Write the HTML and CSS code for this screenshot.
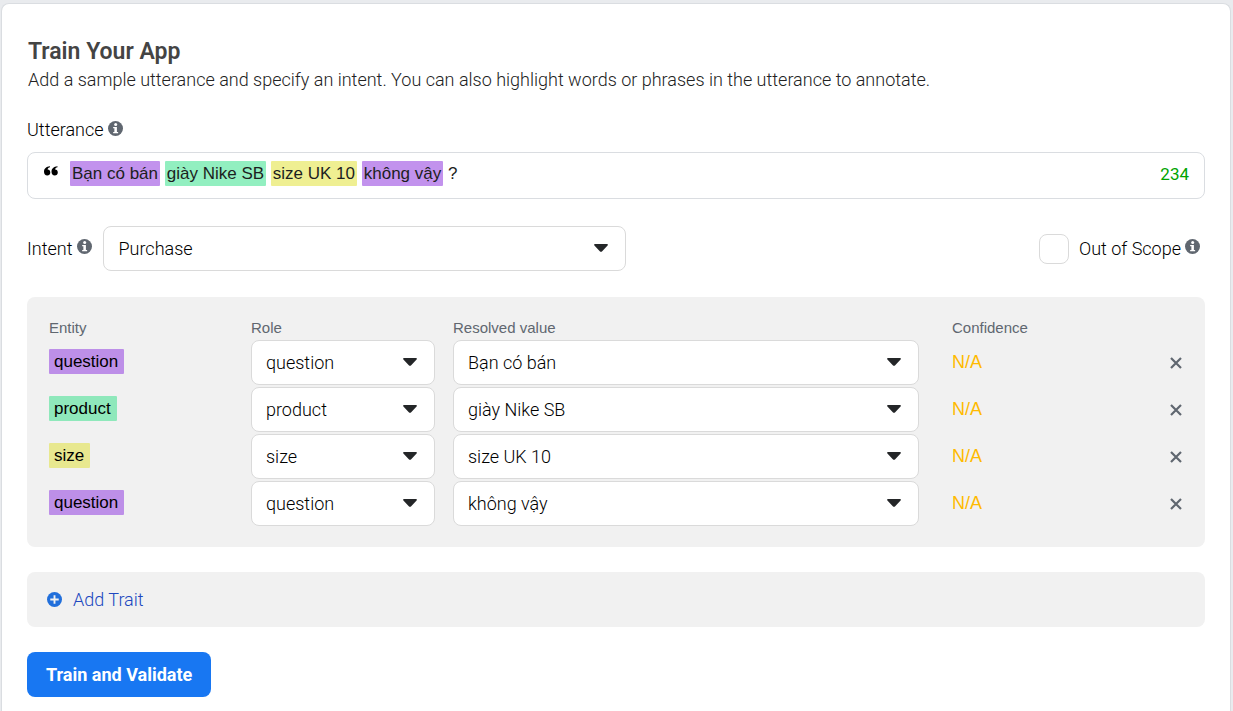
FILE: index.html
```html
<!DOCTYPE html>
<html lang="en">
<head>
<meta charset="utf-8">
<meta name="viewport" content="width=device-width, initial-scale=1">
<title>Train Your App</title>
<link rel="stylesheet" href="styles.css">
</head>
<body>
<svg class="sprite" aria-hidden="true">
  <symbol id="info" viewBox="0 0 16 16">
    <circle cx="8" cy="8" r="8" fill="#606770"/>
    <circle cx="8.200" cy="3.700" r="1.600" fill="#fff"/>
    <path d="M5.500 6.400h4v5.200h1.300v1.400H5.500v-1.400h1.300V7.800H5.500z" fill="#fff"/>
  </symbol>
  <symbol id="caret" viewBox="0 0 14 8">
    <path d="M1 0h12c.9 0 1.200.9.600 1.500L8.200 7.300c-.7.700-1.700.7-2.400 0L.4 1.500C-.2.900.1 0 1 0z" fill="#242628"/>
  </symbol>
  <symbol id="cross" viewBox="0 0 12 12">
    <path d="M1 1l10 10M11 1L1 11" fill="none" stroke="#606770" stroke-width="2.200"/>
  </symbol>
</svg>
<main class="card">
  <header class="heading">
    <h1 class="title">Train Your App</h1>
    <p class="subtitle">Add a sample utterance and specify an intent. You can also highlight words or phrases in the utterance to annotate.</p>
  </header>

  <div class="label-row">
    <span class="label" id="utterance-label">Utterance</span>
    <svg class="info-icon" aria-hidden="true"><use href="#info"/></svg>
  </div>
  <div class="utterance">
    <svg class="quote-icon" viewBox="0 0 14 10" aria-hidden="true">
      <path d="M6 .3v1C4.500 1.600 3.700 2.400 3.600 3.600c1.600 0 2.700 1.200 2.700 2.800S5 9.500 3.300 9.500C1.300 9.500 0 8 0 5.800 0 2.700 2.300.4 6 .3zM13.500.3v1c-1.500.3-2.300 1.100-2.400 2.300 1.600 0 2.700 1.200 2.700 2.800s-1.300 3.100-3 3.100c-2 0-3.300-1.500-3.300-3.700C7.500 2.700 9.800.4 13.500.3z"/>
    </svg>
    <div class="utterance-text" role="textbox" contenteditable="true" spellcheck="false" aria-labelledby="utterance-label"><mark class="mark purple">Bạn có bán</mark> <mark class="mark green">giày Nike SB</mark> <mark class="mark yellow">size UK 10</mark> <mark class="mark purple">không vậy</mark> ?</div>
    <span class="counter">234</span>
  </div>

  <div class="intent-row">
    <div class="intent">
      <label class="label" for="intent">Intent</label>
      <svg class="info-icon" aria-hidden="true"><use href="#info"/></svg>
      <div class="dropdown intent-dropdown">
        <select class="select" id="intent"><option>Purchase</option></select>
        <svg class="caret" aria-hidden="true"><use href="#caret"/></svg>
      </div>
    </div>
    <div class="scope">
      <input class="checkbox" type="checkbox" id="scope">
      <label class="label" for="scope">Out of Scope</label>
      <svg class="info-icon" aria-hidden="true"><use href="#info"/></svg>
    </div>
  </div>

  <section class="panel entities">
    <table class="table">
      <colgroup><col class="col-entity"><col class="col-role"><col class="col-value"><col class="col-confidence"><col class="col-remove"></colgroup>
      <thead>
        <tr><th>Entity</th><th>Role</th><th>Resolved value</th><th>Confidence</th><td></td></tr>
      </thead>
      <tbody>
        <tr>
          <td><span class="tag purple">question</span></td>
          <td><div class="dropdown role"><select class="select" aria-label="Role"><option>question</option></select><svg class="caret" aria-hidden="true"><use href="#caret"/></svg></div></td>
          <td><div class="dropdown value"><select class="select" aria-label="Resolved value"><option>Bạn có bán</option></select><svg class="caret" aria-hidden="true"><use href="#caret"/></svg></div></td>
          <td class="confidence">N/A</td>
          <td><button class="remove" type="button" aria-label="Remove"><svg class="cross" aria-hidden="true"><use href="#cross"/></svg></button></td>
        </tr>
        <tr>
          <td><span class="tag green">product</span></td>
          <td><div class="dropdown role"><select class="select" aria-label="Role"><option>product</option></select><svg class="caret" aria-hidden="true"><use href="#caret"/></svg></div></td>
          <td><div class="dropdown value"><select class="select" aria-label="Resolved value"><option>giày Nike SB</option></select><svg class="caret" aria-hidden="true"><use href="#caret"/></svg></div></td>
          <td class="confidence">N/A</td>
          <td><button class="remove" type="button" aria-label="Remove"><svg class="cross" aria-hidden="true"><use href="#cross"/></svg></button></td>
        </tr>
        <tr>
          <td><span class="tag yellow">size</span></td>
          <td><div class="dropdown role"><select class="select" aria-label="Role"><option>size</option></select><svg class="caret" aria-hidden="true"><use href="#caret"/></svg></div></td>
          <td><div class="dropdown value"><select class="select" aria-label="Resolved value"><option>size UK 10</option></select><svg class="caret" aria-hidden="true"><use href="#caret"/></svg></div></td>
          <td class="confidence">N/A</td>
          <td><button class="remove" type="button" aria-label="Remove"><svg class="cross" aria-hidden="true"><use href="#cross"/></svg></button></td>
        </tr>
        <tr>
          <td><span class="tag purple">question</span></td>
          <td><div class="dropdown role"><select class="select" aria-label="Role"><option>question</option></select><svg class="caret" aria-hidden="true"><use href="#caret"/></svg></div></td>
          <td><div class="dropdown value"><select class="select" aria-label="Resolved value"><option>không vậy</option></select><svg class="caret" aria-hidden="true"><use href="#caret"/></svg></div></td>
          <td class="confidence">N/A</td>
          <td><button class="remove" type="button" aria-label="Remove"><svg class="cross" aria-hidden="true"><use href="#cross"/></svg></button></td>
        </tr>
      </tbody>
    </table>
  </section>

  <section class="panel traits">
    <button class="add-trait" type="button">
      <svg class="plus-icon" viewBox="0 0 16 16" aria-hidden="true"><circle cx="8" cy="8" r="8" fill="#216fdb"/><path d="M8 3.500v9M3.500 8h9" stroke="#f1f1f1" stroke-width="2"/></svg>
      Add Trait
    </button>
  </section>

  <button class="submit" type="button">Train and Validate</button>
</main>
</body>
</html>
```

FILE: styles.css
```css
* { box-sizing: border-box; }

body {
  margin: 0;
  padding: 3px 2px 0 1px;
  min-height: 100vh;
  display: flex;
  background: #e9ebee;
  color: #1c1e21;
  font: 300 18px/24px Roboto, "Liberation Sans", sans-serif;
}

.sprite { position: absolute; width: 0; height: 0; }

svg { display: block; flex: none; }

.card {
  flex: 1;
  display: flex;
  flex-direction: column;
  align-items: stretch;
  padding: 34px 25px 14px;
  background: #fff;
  border: 1px solid #dadde1;
  border-bottom: 0;
  border-radius: 8px 8px 0 0;
}

.heading { padding-left: 1px; }

.title {
  margin: 0;
  color: #444;
  font-size: 23px;
  font-weight: 600;
  line-height: 28px;
}

.subtitle { margin: 2px 0 0; color: #222; }

.label-row { display: flex; align-items: center; gap: 4px; margin-top: 26px; }
.label { color: #000; }

.info-icon { width: 15px; height: 15px; margin-bottom: 4px; }

.utterance {
  display: flex;
  align-items: flex-start;
  margin-top: 10px;
  min-height: 47px;
  padding: 9px 15px;
  border: 1px solid #dadde1;
  border-radius: 8px;
  font-family: "Liberation Sans", sans-serif;
}

.quote-icon { width: 14px; height: 10px; margin: 4px 12px 0 1px; }

.utterance-text { flex: 1; outline: 0; font-size: 17px; }

.mark { padding: 3px 2px; border-radius: 1px; color: inherit; }
.purple { background: #c292ed; }
.green { background: #92efc0; }
.yellow { background: #efef92; }

.counter { color: #00a400; font: 400 17px/24px Roboto, sans-serif; }

.intent-row {
  display: flex;
  justify-content: space-between;
  align-items: center;
  margin-top: 27px;
  padding-right: 5px;
}

.intent { display: flex; align-items: center; gap: 5px; }
.scope { display: flex; align-items: center; gap: 4px; }

.dropdown { display: grid; align-items: center; }
.intent-dropdown { width: 523px; margin-left: 6px; }

.select {
  grid-area: 1 / 1;
  appearance: none;
  width: 100%;
  height: 45px;
  padding: 0 40px 0 14px;
  border: 1px solid #dadada;
  border-radius: 8px;
  background: #fff;
  color: #000;
  font: inherit;
}

.caret {
  grid-area: 1 / 1;
  justify-self: end;
  width: 14px;
  height: 8px;
  margin: 0 18px 2px 0;
  pointer-events: none;
}

.checkbox {
  appearance: none;
  width: 30px;
  height: 30px;
  margin: 0 6px 0 0;
  border: 1px solid #dadada;
  border-radius: 8px;
  background: #fff;
}

.panel { background: #f1f1f1; border-radius: 8px; }
.entities { margin-top: 26px; padding: 19px 15px 19px 22px; }
.traits { margin-top: 25px; padding: 15px 20px; }

.table { width: 100%; border-collapse: collapse; table-layout: fixed; }
.col-entity, .col-role { width: 202px; }
.col-confidence { width: 202px; }
.col-remove { width: 36px; }

.table th {
  padding: 0;
  color: #606770;
  font: 15px/24px "Liberation Sans", sans-serif;
  text-align: left;
}

.table tbody td { padding: 0 0 2px; }
.table tbody .confidence { padding-bottom: 4px; color: #ffba00; font-family: "Liberation Sans", sans-serif; }
.role { width: 184px; }
.value { margin-right: 33px; }

.tag {
  display: block;
  width: fit-content;
  margin-bottom: 2px;
  padding: 0 6px 0 5px;
  border-radius: 1px;
  color: #000;
  font: 17px/25px "Liberation Sans", sans-serif;
}
.tag.purple { background: #bd8fe8; }
.tag.green { background: #8fe8bb; }
.tag.yellow { background: #e8e88f; }

button { border: 0; cursor: pointer; font: inherit; }

.remove { display: block; margin-left: auto; padding: 8px; background: none; }
.cross { width: 12px; height: 12px; }

.add-trait {
  display: flex;
  align-items: center;
  gap: 11px;
  padding: 0;
  background: none;
  color: #2048c0;
  line-height: 25px;
}
.plus-icon { width: 15px; height: 15px; }

.submit {
  align-self: flex-start;
  height: 45px;
  margin-top: 25px;
  padding: 0 19px;
  border-radius: 8px;
  background: #1877f2;
  color: #fff;
  font-weight: 700;
}
```
